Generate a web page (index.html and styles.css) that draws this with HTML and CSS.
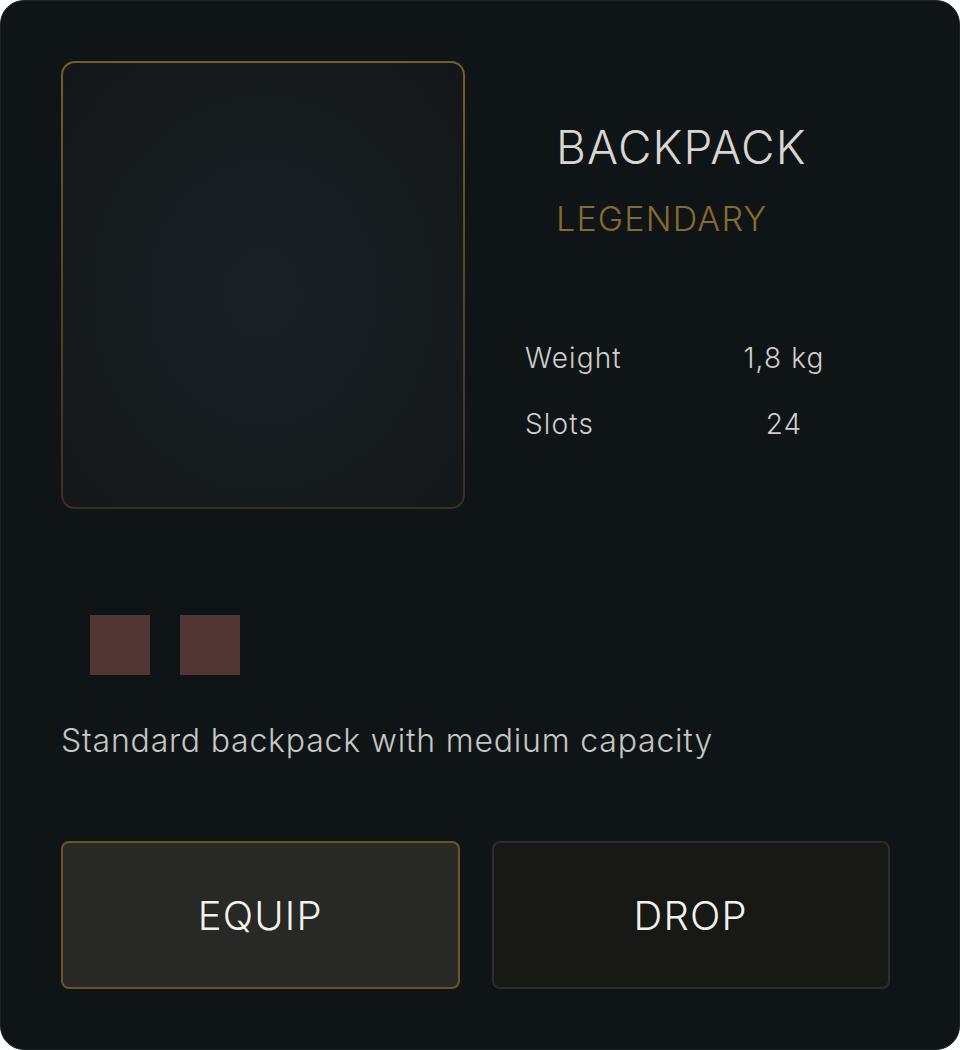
FILE: index.html
```html
<!DOCTYPE html>
<html lang="en">
<head>
<meta charset="utf-8">
<title>Backpack</title>
<link rel="stylesheet" href="styles.css">
</head>
<body>
<div class="card">
  <div class="top">
    <div class="preview"></div>
    <div class="info">
      <div class="title">BACKPACK</div>
      <div class="rarity">LEGENDARY</div>
      <div class="stats">
        <div class="label">Weight</div><div class="value">1,8 kg</div>
        <div class="label">Slots</div><div class="value">24</div>
      </div>
    </div>
  </div>
  <div class="swatches">
    <div class="swatch"></div>
    <div class="swatch"></div>
  </div>
  <p class="desc">Standard backpack with medium capacity</p>
  <div class="actions">
    <button class="btn btn-primary">EQUIP</button>
    <button class="btn btn-secondary">DROP</button>
  </div>
</div>
</body>
</html>
```
FILE: styles.css
```css
* { box-sizing: border-box; }
html, body { margin: 0; padding: 0; background: #ffffff; }
body { font-family: Inter, "Noto Sans", sans-serif; font-weight: 300; }

.card {
  width: 960px;
  height: 1050px;
  background: #0f1516;
  border: 1px solid #1d2427;
  border-radius: 24px;
  padding: 60px 69px 0 60px;
}

.top {
  display: flex;
  gap: 61px;
}

.preview {
  width: 404px;
  height: 448px;
  flex: none;
  border: 2px solid transparent;
  border-radius: 14px;
  background:
    radial-gradient(ellipse at 50% 52%, #182124 0%, #161b1e 55%, #141719 100%) padding-box,
    linear-gradient(180deg, #7a5c26 0%, #5a4624 50%, #3a3020 100%) border-box;
}

.info { flex: 1; }

.title {
  margin: 58px 0 0 30px;
  font-size: 46px;
  line-height: 56px;
  color: #d9d5d1;
  letter-spacing: 0.026em;
}

.rarity {
  margin: 24px 0 0 30px;
  font-size: 34px;
  line-height: 40px;
  color: #8a6a2c;
  letter-spacing: 0.035em;
}

.stats {
  margin-top: 102px;
  display: grid;
  grid-template-columns: 180px 156px;
  row-gap: 32px;
  font-size: 28px;
  line-height: 34px;
  color: #cfcecb;
  letter-spacing: 0.04em;
}

.label { margin-left: -1px; }
.value { text-align: center; }

.swatches {
  display: flex;
  gap: 30px;
  margin: 106px 0 0 29px;
}

.swatch {
  width: 60px;
  height: 60px;
  background: #523634;
}

.desc {
  margin: 46px 0 0 0;
  font-size: 32px;
  line-height: 40px;
  color: #c6c6c2;
  letter-spacing: 0.025em;
}

.actions {
  display: flex;
  gap: 32px;
  margin-top: 80px;
}

.btn {
  width: 399px;
  height: 148px;
  border-radius: 8px;
  border: 2px solid;
  font-family: Inter, "Noto Sans", sans-serif;
  font-weight: 300;
  font-size: 40px;
  letter-spacing: 0.03em;
  color: #f2f2ef;
  padding: 0;
}

.btn-primary {
  background: #282824;
  border-color: #6b5326;
}

.btn-secondary {
  background: #181914;
  border-color: #2b2e2f;
}
```
